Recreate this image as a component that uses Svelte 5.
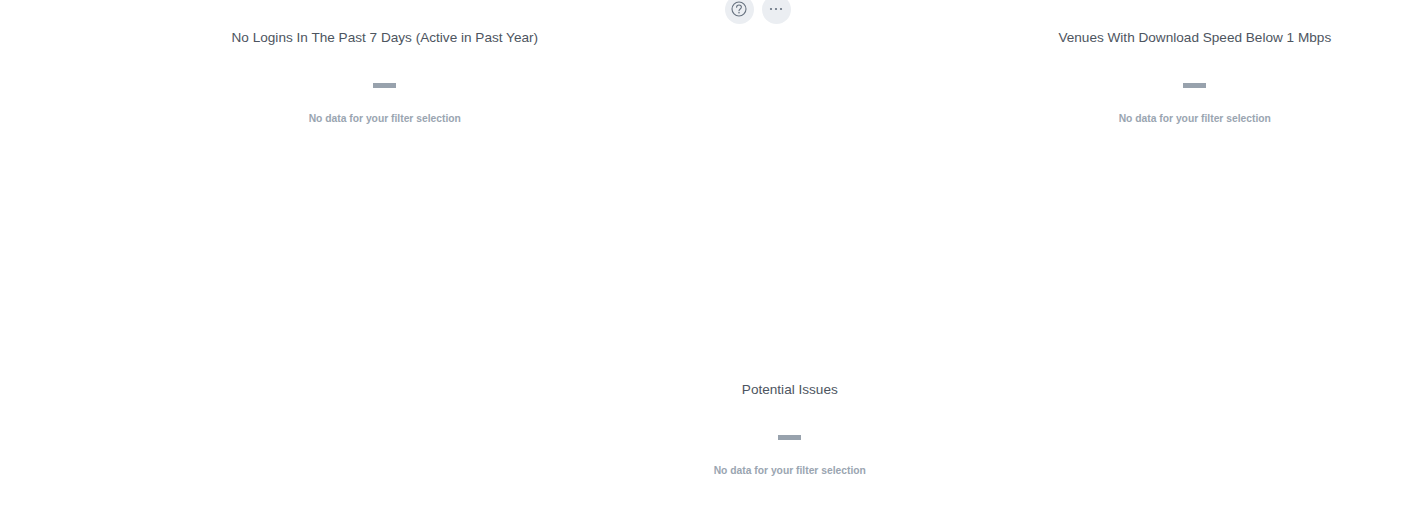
<script>
	const topRow = [
		{ title: 'No Logins In The Past 7 Days (Active in Past Year)' },
		{ title: '', actions: true },
		{ title: 'Venues With Download Speed Below 1 Mbps' }
	];
</script>

<div class="page">
	<div class="grid">
		{#each topRow as tile}
			<section class="tile">
				{#if tile.actions}
					<div class="actions">
						<button aria-label="Help">
							<svg width="16" height="16" viewBox="0 0 16 16" fill="none" stroke="#66717f" stroke-width="1.1">
								<circle cx="8" cy="8" r="7" />
								<path d="M5.6 6.2C5.6 4.8 6.7 4 8 4s2.4.8 2.4 2.1c0 1.8-2.4 1.9-2.4 3.7" stroke-linecap="round" />
								<circle cx="8" cy="11.8" r=".8" fill="#66717f" stroke="none" />
							</svg>
						</button>
						<button aria-label="More">
							<svg width="16" height="16" viewBox="0 0 16 16" fill="#66717f">
								<circle cx="3" cy="8" r="1.1" />
								<circle cx="8" cy="8" r="1.1" />
								<circle cx="13" cy="8" r="1.1" />
							</svg>
						</button>
					</div>
				{:else}
					<h3>{tile.title}</h3>
					<div class="dash"></div>
					<p>No data for your filter selection</p>
				{/if}
			</section>
		{/each}
		<section class="tile wide">
			<h3>Potential Issues</h3>
			<div class="dash"></div>
			<p>No data for your filter selection</p>
		</section>
	</div>
</div>

<style>
	:global(body) {
		background: #fff;
		overflow: hidden;
	}

	.page {
		height: 517px;
		overflow: hidden;
		padding-left: 182.3px;
		padding-right: 11px;
		font-family: 'Liberation Sans', Arial, sans-serif;
	}

	.grid {
		display: grid;
		grid-template-columns: repeat(3, 405px);
		grid-auto-rows: 352px;
		margin-top: -5px;
	}

	.tile {
		display: flex;
		flex-direction: column;
		align-items: center;
		padding-top: 34px;
		box-sizing: border-box;
	}

	.wide {
		grid-column: 2;
	}

	h3 {
		margin: 0;
		font-size: 13.6px;
		line-height: 18px;
		font-weight: 400;
		color: #4d5560;
		white-space: nowrap;
	}

	.dash {
		width: 23px;
		height: 5px;
		margin-top: 36px;
		background: #98a2ad;
	}

	p {
		margin: 23px 0 0;
		font-size: 10.3px;
		line-height: 16px;
		font-weight: 700;
		color: #9aa5b1;
		white-space: nowrap;
	}

	.actions {
		display: flex;
		gap: 8px;
		margin-top: -34px;
		padding-right: 64px;
	}

	button {
		display: flex;
		align-items: center;
		justify-content: center;
		width: 29px;
		height: 29px;
		padding: 0;
		border: 0;
		border-radius: 50%;
		background: #ebeef2;
	}

	button svg {
		margin-top: -1px;
	}
</style>
